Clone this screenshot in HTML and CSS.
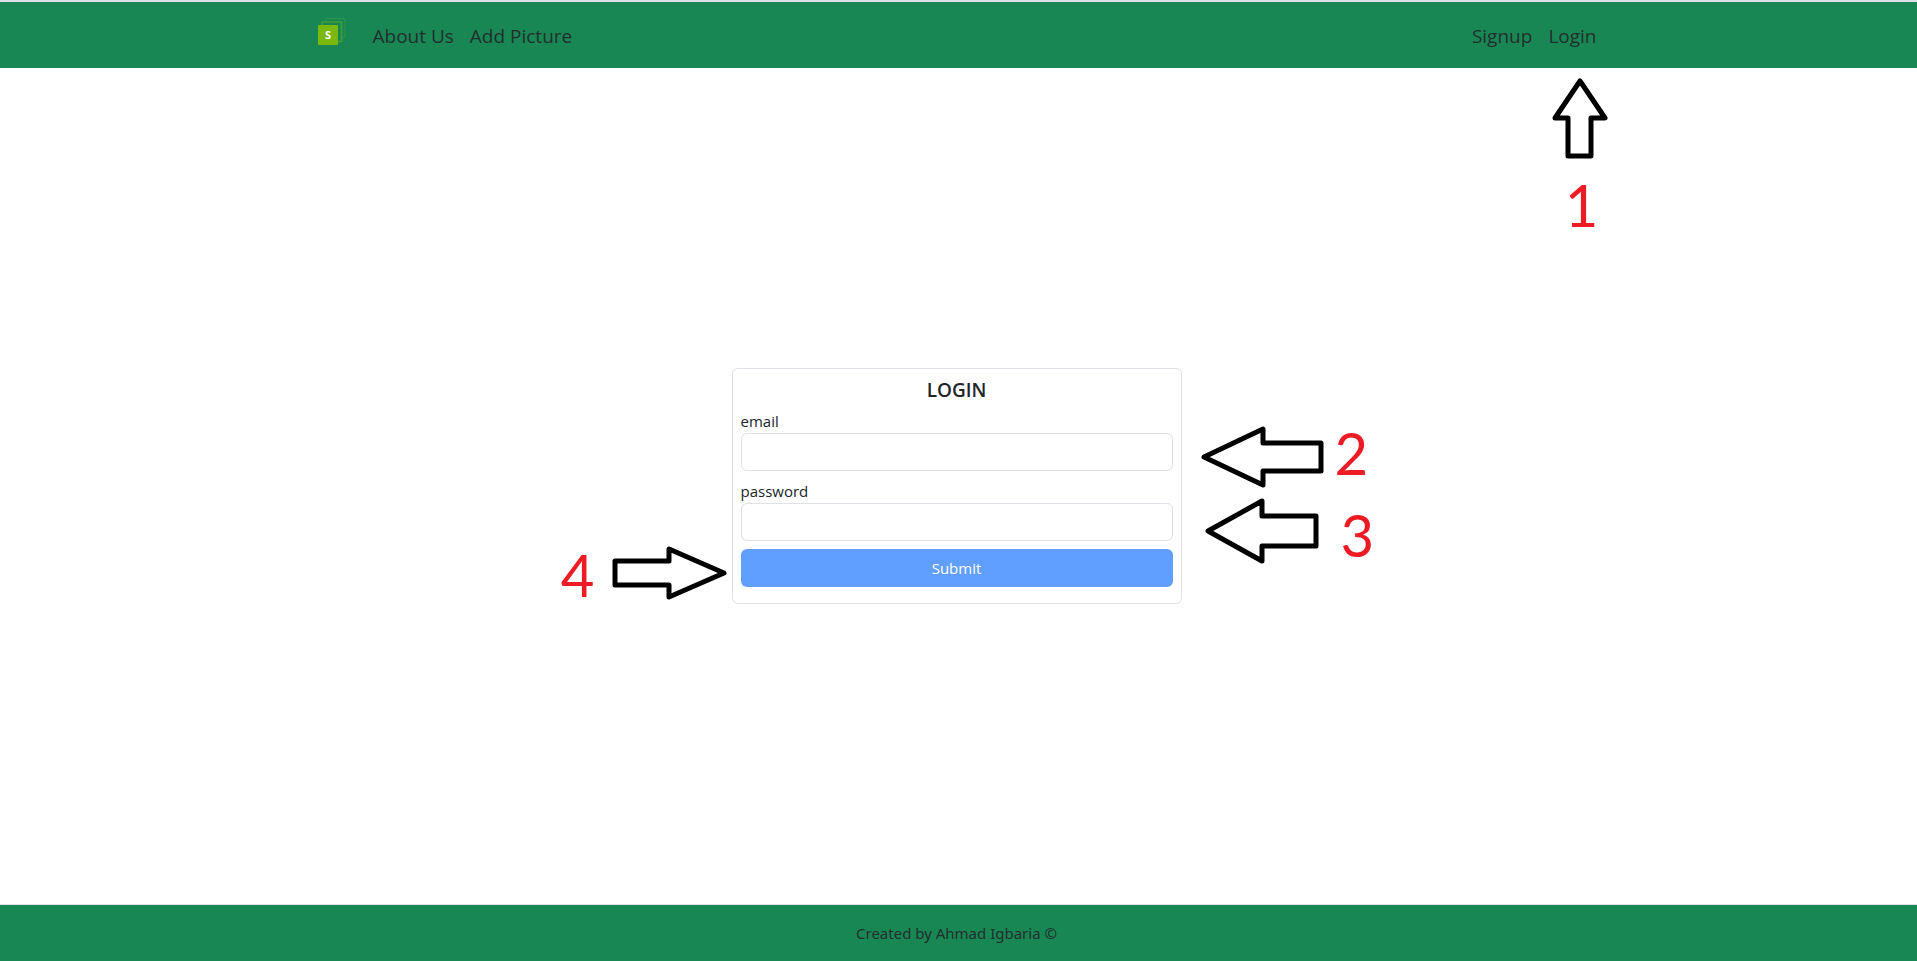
FILE: index.html
```html
<!DOCTYPE html>
<html lang="en">
<head>
<meta charset="utf-8">
<meta name="viewport" content="width=device-width, initial-scale=1">
<title>Login</title>
<link rel="stylesheet" href="styles.css">
</head>
<body>
<header class="site-header">
  <nav class="container">
    <a class="brand" href="#" aria-label="Home">
      <svg width="30" height="30" viewBox="0 0 30 30">
        <path d="M9 4V1.500H28V20.500H25" fill="none" stroke="#2f9549" stroke-width="1"/>
        <path d="M5 8V5H24.500V24.500H21" fill="none" stroke="#449f30" stroke-width="1.500"/>
        <rect x="1" y="8" width="20" height="20" rx="1" fill="#7ab80e"/>
        <text class="brand-letter" x="11" y="22" text-anchor="middle">S</text>
      </svg>
    </a>
    <ul class="nav-list">
      <li><a href="#">About Us</a></li>
      <li><a href="#">Add Picture</a></li>
    </ul>
    <ul class="nav-list nav-end">
      <li><a href="#">Signup</a></li>
      <li><a href="#">Login</a></li>
    </ul>
    <svg class="arrow arrow-1" width="56" height="84" viewBox="0 0 56 84"><path d="M28 5 53 42H39V80H16V42H3Z"/></svg>
    <span class="step step-1">1</span>
  </nav>
</header>
<main class="content">
  <form class="card">
    <h1>LOGIN</h1>
    <label for="email">email</label>
    <input id="email" type="email">
    <label for="password">password</label>
    <input id="password" type="password">
    <button type="button">Submit</button>
    <svg class="arrow arrow-2" width="124" height="64" viewBox="0 0 124 64"><path d="M4 32 63 4V18H121V46H63V60Z"/></svg>
    <span class="step step-2">2</span>
    <svg class="arrow arrow-3" width="116" height="68" viewBox="0 0 116 68"><path d="M4 34 58 4V19H112V49H58V64Z"/></svg>
    <span class="step step-3">3</span>
    <svg class="arrow arrow-4" width="116" height="56" viewBox="0 0 116 56"><path d="M112 28 57 4V16H3V40H57V52Z"/></svg>
    <span class="step step-4">4</span>
  </form>
</main>
<footer class="site-footer">Created by Ahmad Igbaria ©</footer>
</body>
</html>
```
FILE: styles.css
```css
* { box-sizing: border-box; }
body {
  margin: 0;
  min-height: 100vh;
  display: flex;
  flex-direction: column;
  font: 15px/24px "Open Sans", "Noto Sans", sans-serif;
  color: #212529;
  background: #fff;
}
.site-header {
  background: #198754;
  border-top: 2px solid #dee2e6;
  padding: 8px 4px 8px 0;
}
.container {
  position: relative;
  max-width: 1320px;
  min-height: 50px;
  margin: 0 auto;
  padding: 0 12px;
  display: flex;
  align-items: center;
}
.brand { display: block; height: 36px; margin: 0 18px 0 8px; }
.brand-letter { font: bold 11px "Open Sans", sans-serif; fill: #fff; }
.nav-list {
  display: flex;
  margin: 0;
  padding: 0;
  list-style: none;
}
.nav-end { margin-left: auto; }
.nav-list a {
  display: block;
  padding: 9px 8px 7px;
  font-size: 19px;
  line-height: 30px;
  color: #212f2e;
  text-decoration: none;
}
.content {
  flex: 1;
  display: flex;
  align-items: center;
  justify-content: center;
  padding-right: 4px;
}
.card {
  position: relative;
  width: 450px;
  padding: 8px 8px 16px;
  border: 1px solid #dee2e6;
  border-radius: 6px;
}
.card h1 {
  margin: 0 0 6px;
  font-size: 19px;
  font-weight: 600;
  line-height: 26px;
  text-align: center;
}
.card label { display: block; }
.card input {
  display: block;
  width: 100%;
  height: 38px;
  margin-bottom: 8px;
  padding: 6px 12px;
  border: 1px solid #dee2e6;
  border-radius: 6px;
  font: inherit;
}
.card button {
  display: block;
  width: 100%;
  height: 38px;
  border: 0;
  border-radius: 6px;
  background: #609fff;
  color: #fff;
  font: inherit;
}
.site-footer {
  padding: 16px 4px 16px 0;
  border-top: 1px solid #dee2e6;
  background: #198754;
  font-family: "Noto Sans", sans-serif;
  text-align: center;
  color: #212f2e;
}
.arrow { position: absolute; pointer-events: none; }
.arrow path {
  fill: none;
  stroke: #000;
  stroke-width: 5;
  stroke-linejoin: round;
}
.step {
  position: absolute;
  font: 58px/60px Lato, sans-serif;
  color: #ed1c24;
}
.arrow-1 { right: 9px; top: 66px; }
.step-1 { right: 18px; top: 165px; }
.arrow-2 { left: 467px; top: 56px; }
.step-2 { left: 602px; top: 54px; }
.arrow-3 { left: 471px; top: 128px; }
.step-3 { left: 608px; top: 136px; }
.arrow-4 { right: 453px; top: 176px; }
.step-4 { right: 586px; top: 176px; }
```
